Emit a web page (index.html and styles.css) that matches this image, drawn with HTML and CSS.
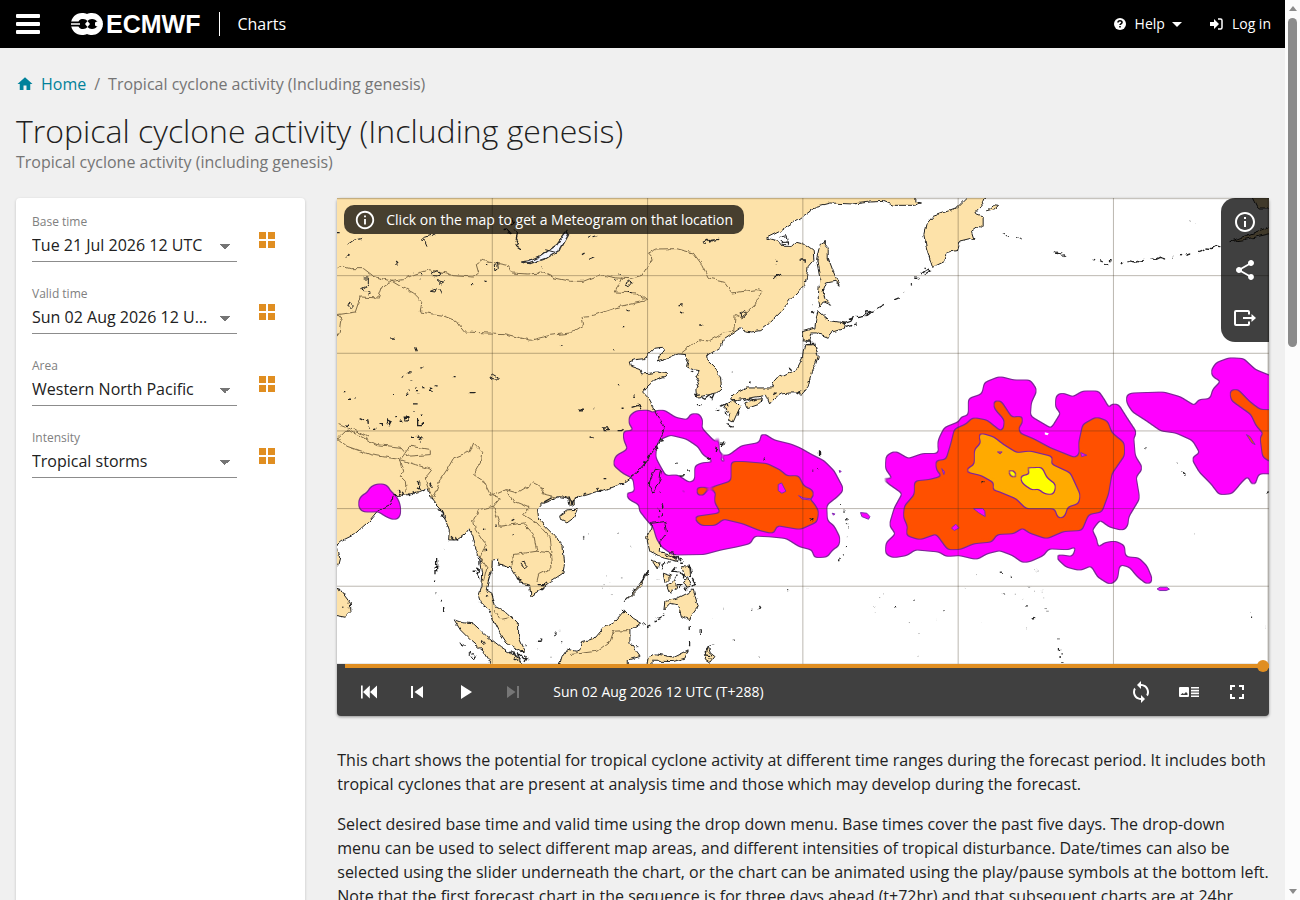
FILE: index.html
```html
<!DOCTYPE html>
<html lang="en">
<head>
  <meta charset="UTF-8">
  <meta name="viewport" content="width=device-width, initial-scale=1.0">
  <title>Tropical cyclone activity (Including genesis) | ECMWF</title>
  <link rel="stylesheet" href="styles.css">
</head>
<body>
  <div class="page">
    <header class="topbar">
      <button class="menu-btn" aria-label="Menu"><span></span><span></span><span></span></button>
      <a class="logo" href="#" aria-label="ECMWF">
        <svg width="32" height="22" viewBox="0 0 32 22">
          <path fill="#fff" d="M11 0C13 0 14.500.3 16 1 17.500.3 19 0 21 0c5 0 9 3.500 10.500 8v6C30 18.500 26 22 21 22c-2 0-3.500-.3-5-1-1.500.7-3 1-5 1C5 22 0 17.500 0 11S5 0 11 0z"/>
          <path d="M0 8.500h7.500C8.500 6.500 10 6 12 6c2 0 3.300.7 4.500 2 1.200-1.300 2.500-2 4.500-2 2.500 0 4 1 5 2.500h6v5h-6C25 15 23.500 16 21 16c-2 0-3.300-.7-4.500-2-1.200 1.300-2.500 2-4.500 2-2 0-3.500-.5-4.500-2.500H0z"/>
          <path fill="#fff" d="M0 10.200h9v1.600H0zM16.500 8l2.500 3-2.500 3-2.500-3zM24 9.500l3-1.500h4.500l.5 3-.5 3H27l-3-1.500z"/>
        </svg>
        <span>ECMWF</span>
      </a>
      <a class="app-name" href="#">Charts</a>
      <nav class="topnav">
        <button class="nav-item">
          <svg width="12" height="12" viewBox="0 0 12 12"><circle cx="6" cy="6" r="6" fill="#fff"/><path d="M4 4.600C4 2.200 8 2.200 8 4.500 8 5.800 6 5.800 6 7" fill="none" stroke="#000" stroke-width="1.600"/><path d="M5.200 8h1.600v1.500H5.200z"/></svg>
          <span>Help</span>
          <svg class="caret" width="10" height="5" viewBox="0 0 10 5"><path fill="#fff" d="M0 0h10L5 5z"/></svg>
        </button>
        <a class="nav-item" href="#">
          <svg width="13" height="12" viewBox="0 0 13 12"><path fill="#fff" d="M0 4h4V1l5 5-5 5V8H0z"/><path d="M8 1h2.500Q12 1 12 2.500v7Q12 11 10.500 11H8" fill="none" stroke="#fff" stroke-width="1.500"/></svg>
          <span>Log in</span>
        </a>
      </nav>
    </header>

    <main class="content">
      <nav class="breadcrumb">
        <a href="#"><svg width="18" height="18" viewBox="0 0 24 24"><path fill="currentColor" d="M10 20v-6h4v6h5v-8h3L12 3 2 12h3v8z"/></svg>Home</a>
        <span class="sep">/</span>
        <span>Tropical cyclone activity (Including genesis)</span>
      </nav>
      <h1>Tropical cyclone activity (Including genesis)</h1>
      <p class="subtitle">Tropical cyclone activity (including genesis)</p>

      <div class="columns">
        <form class="filters">
          <div class="filter">
            <div class="field">
              <label for="base">Base time</label>
              <select id="base"><option>Tue 21 Jul 2026 12 UTC</option></select>
            </div>
            <button type="button" class="grid-btn" aria-label="All base times"><span></span><span></span><span></span><span></span></button>
          </div>
          <div class="filter">
            <div class="field">
              <label for="valid">Valid time</label>
              <select id="valid"><option>Sun 02 Aug 2026 12 UTC (T+288)</option></select>
            </div>
            <button type="button" class="grid-btn" aria-label="All valid times"><span></span><span></span><span></span><span></span></button>
          </div>
          <div class="filter">
            <div class="field">
              <label for="area">Area</label>
              <select id="area"><option>Western North Pacific</option></select>
            </div>
            <button type="button" class="grid-btn" aria-label="All areas"><span></span><span></span><span></span><span></span></button>
          </div>
          <div class="filter">
            <div class="field">
              <label for="intensity">Intensity</label>
              <select id="intensity"><option>Tropical storms</option></select>
            </div>
            <button type="button" class="grid-btn" aria-label="All intensities"><span></span><span></span><span></span><span></span></button>
          </div>
        </form>

        <section class="chart">
          <div class="viewer">
            <div class="map">
              <svg class="map-svg" viewBox="0 0 2796 1398">
                <defs>
                  <filter id="rough" filterUnits="userSpaceOnUse" x="-20" y="-20" width="2836" height="1438" color-interpolation-filters="sRGB">
                    <feTurbulence type="fractalNoise" baseFrequency="0.05" numOctaves="2" seed="4"/>
                    <feDisplacementMap in="SourceGraphic" scale="14" xChannelSelector="R" yChannelSelector="G"/>
                  </filter>
                  <!-- rounds the polygon corners and draws a thin outline -->
                  <filter id="smooth" filterUnits="userSpaceOnUse" x="-20" y="-20" width="2880" height="1438" color-interpolation-filters="sRGB">
                    <feGaussianBlur stdDeviation="6"/>
                    <feComponentTransfer result="shape"><feFuncA type="linear" slope="6" intercept="-2.500"/></feComponentTransfer>
                    <feMorphology in="shape" operator="dilate" radius="2"/>
                    <feComponentTransfer result="edge">
                      <feFuncR type="linear" slope="0" intercept="0.500"/>
                      <feFuncG type="linear" slope="0" intercept="0.150"/>
                      <feFuncB type="linear" slope="0" intercept="0.600"/>
                    </feComponentTransfer>
                    <feMerge><feMergeNode in="edge"/><feMergeNode in="shape"/></feMerge>
                  </filter>
                  <g id="coast">
                    <!-- mainland -->
                    <path d="M-30-30H1734V10L1754 15 1730 22 1670 22 1640 10 1600 12 1549 18 1479 15 1439 25 1410 46 1389 62 1339 95 1289 120 1324 130 1339 148 1364 148 1379 133 1399 138 1419 152 1429 160 1431 185 1414 205 1409 235 1404 262 1389 278 1364 300 1334 340 1299 375 1269 398 1244 402 1219 397 1214 388 1189 405 1159 425 1154 445 1109 475 1111 487 1139 515 1151 540 1154 572 1139 585 1109 592 1079 598 1077 575 1087 550 1077 535 1087 518 1069 515 1049 508 1054 488 1044 470 1024 468 989 482 961 492 969 475 984 455 974 445 954 448 934 468 924 482 894 485 877 492 881 505 909 515 914 528 939 526 961 522 991 528 984 538 949 550 929 568 917 582 934 600 947 625 959 645 974 672 984 692 974 716 961 741 944 766 924 796 894 831 859 856 819 871 779 881 744 892 711 901 712 921 700 926 695 900 665 896 640 908 618 916 602 936 605 961 625 986 655 1016 678 1046 683 1096 678 1126 640 1151 615 1171 582 1196 578 1161 550 1156 535 1131 520 1106 500 1104 485 1101 485 1084 466 1086 465 1111 455 1146 448 1176 465 1186 475 1226 510 1244 545 1281 545 1316 565 1361 550 1361 510 1336 490 1306 470 1266 460 1241 430 1211 425 1196 435 1166 437 1126 430 1086 415 1046 408 1011 395 994 385 1008 360 1026 335 1026 337 996 325 961 315 936 295 916 280 896 270 871 245 881 210 891 170 893 160 921 120 941 95 971 50 1011 15 1028 0 1041 8 1080 0 1111-30 1111z"/>
                    <!-- Kamchatka and Chukotka -->
                    <path d="M1899-10L1859 30 1789 55 1767 80 1761 110 1769 150 1787 208 1824 190 1831 163 1861 158 1869 132 1911 122 1904 100 1924 85 1939 88 1939 55 1914 45 1939 15 1949-10zM1949 38L1970 20 1985 22 1975 32zM2745-10L2755 10 2765 30 2810 30V-10zM2679 131L2730 112 2810 82V105L2720 125z"/>
                    <!-- Sakhalin, Hokkaido, Honshu, Shikoku, Kyushu -->
                    <path d="M1449 140L1461 132 1474 150 1474 180 1489 220 1507 262 1494 250 1469 255 1459 280 1464 305 1481 322 1459 312 1449 325 1444 300 1449 240 1439 185zM1444 338L1479 368 1524 375 1519 392 1487 402 1474 418 1439 405 1424 405 1419 430 1399 425 1394 402 1434 390 1437 365zM1404 440L1434 440 1444 475 1434 505 1424 520 1414 565 1399 585 1359 585 1334 588 1314 600 1299 617 1289 592 1239 600 1199 605 1179 605 1194 588 1229 570 1279 570 1304 570 1311 550 1329 530 1339 535 1379 515 1397 480 1399 460zM1224 615L1249 605 1274 602 1264 620 1229 632zM1164 620L1189 605 1211 625 1199 650 1189 672 1174 665 1179 645 1159 630z"/>
                    <!-- Hainan, Taiwan, Luzon and the Philippines -->
                    <path d="M668 951L690 936 721 934 709 961 690 975 670 965zM939 846L957 811 974 814 969 846 949 884 937 866zM944 976L984 971 989 1006 969 1031 967 1061 999 1068 1024 1091 1000 1085 964 1076 939 1061 929 1021 941 996zM944 1086L967 1096 961 1113zM1034 1106L1059 1108 1061 1136 1044 1136zM979 1126L1004 1134 984 1154zM989 1161L1014 1146 1019 1171 999 1186zM981 1236L984 1211 1019 1201 1069 1176 1084 1226 1069 1246 1057 1266 1034 1256 1024 1221 999 1216zM862 1211L899 1171 934 1121 914 1161 879 1196zM1040 1150L1052 1140 1062 1165 1050 1168zM984 1070L1010 1062 1020 1082z"/>
                    <!-- Borneo, Sulawesi, Halmahera, Sumatra, Sri Lanka -->
                    <path d="M665 1410L675 1376 690 1354 720 1360 729 1356 734 1331 774 1321 799 1291 829 1276 864 1236 889 1261 914 1276 879 1296 879 1336 909 1376 874 1386 874 1410zM929 1410L934 1376 959 1368 1009 1378 1054 1356 1044 1381 1009 1391 949 1390zM1104 1386L1114 1346 1120 1365 1134 1376 1119 1396zM352 1266L375 1274 410 1278 440 1306 490 1346 545 1381 560 1410 470 1410 440 1361 400 1326 370 1296zM-20 1165L10 1176 40 1216 42 1241 25 1258-20 1250z"/>
                  </g>
                </defs>
                <rect width="2796" height="1398" fill="#fff"/>
                <g filter="url(#rough)">
                  <use href="#coast" fill="#fde2a9"/>
                  <path class="lake" d="M553 192L580 189 610 175 660 140 690 98 695 110 670 155 630 180 580 197z"/>
                </g>

                <!-- probability bands, lowest to highest -->
                <g fill="#f0f" filter="url(#smooth)">
                  <path d="M66 916Q68 893 92 886 100 860 130 859 155 860 158 880 188 900 190 936 190 964 170 964 145 955 125 939 100 942 80 940 66 935 66 916z"/>
                  <path fill-rule="evenodd" d="M879 655L899 640 935 638 950 650 953 640 980 638 1015 660 1055 668 1060 650 1085 648 1097 670 1092 690 1110 710 1130 730 1137 745 1140 705 1147 715 1145 765 1175 775 1215 745 1270 735 1275 705 1310 728 1360 740 1389 752 1420 770 1460 790 1490 820 1519 875 1500 895 1468 920 1470 970 1490 985 1508 1020 1505 1042 1485 1055 1470 1076 1433 1078 1428 1055 1389 1045 1350 1020 1300 1015 1250 1013 1240 1035 1200 1045 1150 1055 1100 1068 1010 1070 975 1045 960 1020 950 985 935 970 907 935 910 920 880 905 865 885 895 885 890 840 860 825 830 800 838 775 875 755 862 725 860 700 895 700 877 675zM957 746L965 725 1000 710 1050 722 1085 745 1100 770 1125 785 1135 795 1100 795 1075 805 1075 850 1055 855 1020 832 985 835 965 800 955 780zM1146 773L1160 778 1170 797 1152 793zM1027 868L1050 880 1050 890 1034 884z"/>
                  <path d="M1809 720L1824 690 1869 672 1874 657 1896 655 1896 603 1937 590 1944 555 1989 537 2029 548 2079 548 2099 577 2082 612 2079 656 2144 694 2164 661 2174 646 2157 626 2159 596 2174 586 2209 599 2239 581 2284 581 2304 611 2319 639 2324 618 2344 621 2369 661 2399 706 2389 716 2394 776 2416 811 2396 836 2407 901 2374 956 2372 981 2359 996 2319 986 2289 963 2264 996 2279 1026 2282 1053 2304 1036 2334 1031 2362 1044 2364 1078 2404 1081 2429 1106 2446 1146 2434 1159 2404 1136 2379 1106 2347 1098 2341 1141 2321 1159 2284 1136 2264 1101 2229 1116 2189 1106 2157 1076 2164 1071 2209 1078 2221 1041 2194 1054 2134 1051 2119 1071 2079 1089 2059 1093 2029 1071 1989 1056 1949 1066 1919 1083 1869 1071 1829 1074 1809 1061 1734 1054 1709 1071 1669 1078 1647 1066 1649 1036 1679 1008 1659 981 1674 931 1699 886 1625 834 1674 848 1647 811 1649 776 1674 761 1714 784 1759 768 1807 768 1804 735z"/>
                  <path d="M2369 601Q2372 588 2389 587L2479 584 2529 598 2574 626 2587 606 2622 604 2629 576 2657 548Q2625 540 2624 521L2639 496 2679 481 2719 483 2754 516 2850 555V828L2784 826 2764 826 2751 868 2734 831 2714 851 2684 886 2649 889 2624 856 2589 821 2566 781 2592 766 2569 726 2519 704 2474 698 2429 666 2389 641 2374 618z"/>
                </g>
                <path class="band" fill="#f0f" d="M2461 1173L2470 1168H2490L2498 1174 2488 1178H2468zM1571 944L1590 946 1599 956 1595 964 1575 956zM1486 946l8 2-4 4zM1507 818l6 2-4 4z"/>
                <g fill="#ff5000" filter="url(#smooth)">
                  <path d="M1184 792L1219 792 1289 798 1329 818 1349 836 1384 834 1399 866 1424 876 1431 893 1414 903 1429 916 1444 941 1439 971 1389 993 1319 981 1309 1006 1269 996 1219 976 1159 962 1134 981 1094 981 1070 958 1154 946 1134 911 1138 879 1130 876 1108 876 1098 892 1084 891 1079 870 1129 868 1184 851z"/>
                  <path d="M1849 716L1854 695 1889 680 1909 660 1949 668 1989 700 2001 697 2004 665 1974 630 1971 610 1991 610 2024 660 2057 655 2054 678 2044 685 2047 707 2089 724 2139 751 2214 781 2229 771 2227 736 2239 681 2279 659 2311 671 2324 706 2361 736 2362 771 2324 826 2314 886 2294 941 2254 948 2234 996 2179 999 2129 1021 2079 1004 2057 988 2029 1006 1979 1008 1964 1031 1909 1036 1869 1053 1834 1054 1799 1006 1749 1024 1709 1011 1714 986 1701 956 1704 926 1734 891 1734 851 1779 846 1819 836 1801 816 1797 789 1829 786 1844 736z"/>
                  <path d="M2680 579L2701 575 2739 614 2769 636 2850 638V789H2800L2779 776 2771 716 2784 709 2759 681 2744 648 2685 606z"/>
                </g>
                <g class="band">
                  <path fill="#ff5000" d="M2729 710L2740 716 2755 740 2745 735z"/>
                  <path fill="#f0f" d="M1324 860L1334 855 1347 880 1335 886 1324 878zM1385 893L1400 900 1425 903 1418 906 1395 903zM1910 932L1938 932 1944 940 1945 956 1925 944zM1844 990L1857 979 1867 990 1852 998zM2232 764L2250 772 2234 776zM1815 812l8 10-2 8z"/>
                  <path fill="#fff" stroke="none" d="M2124 703L2136 706 2132 712 2124 710z"/>
                </g>
                <path fill="#ffaa00" filter="url(#smooth)" d="M1925 705L1969 718 1999 741 2039 766 2079 761 2149 778 2139 798 2199 826 2229 891 2224 916 2191 926 2184 951 2169 963 2159 946 2157 931 2069 931 2039 901 1979 876 1967 878 1974 854 1934 831 1882 819 1914 801 1914 756 1934 736z"/>
                <path fill="#ff0" filter="url(#smooth)" d="M2050 836L2084 830 2063 800 2085 812 2114 809 2129 841 2156 861 2149 889 2124 886 2104 870 2089 876 2059 856zM2009 815L2028 818 2043 837 2028 839z"/>
                <path class="band" fill="#ff5000" d="M1982 762h14l-6 6z"/>

                <path class="grid" d="M466 0V1398M932 0V1398M1398 0V1398M1864 0V1398M2330 0V1398M0 233H2796M0 466H2796M0 699H2796M0 932H2796M0 1165H2796M0 2H2796M2794 0V1398"/>

                <g filter="url(#rough)">
                  <use href="#coast" class="coastline"/>
                  <!-- country borders -->
                  <path class="border" d="M0 215L15 205 40 212 80 212 110 235 165 250 200 245 230 230 275 215 330 225 345 233 410 237 425 225 418 200 440 185 475 195 515 203 525 225 570 228 620 225 650 240 700 250 739 250 790 230 840 240 880 242 915 232 935 200 948 180 935 165 960 153 1019 152 1069 165 1095 200 1115 240 1160 250 1185 285 1260 275 1275 280 1255 320 1215 360 1195 350 1190 405M165 250L190 265 230 285 255 310 250 342 315 352 355 368 382 402 500 407 580 427 640 412 700 405 740 380 735 355 770 352 850 325 930 308 900 285 835 282 855 238M165 250L135 270 125 300 70 297 55 342 0 350 15 360 10 400 0 415M1030 468L1085 425 1120 430 1159 405 1190 400"/>
                  <path class="border" d="M0 720L30 745 100 770 190 785 205 765 190 748 120 740 60 710 30 696 0 725M5 680L30 690 60 700 95 718M190 785L200 820 190 835 205 850 208 880M190 785L235 800 285 815 265 840 275 875 290 900M290 900L310 845 330 815 350 780 400 760 410 735 435 760 430 795 410 830 440 850 460 890 490 900 470 925 425 935 410 965 415 995 445 1040 430 1080 450 1110 440 1150M470 890L505 875 540 885 590 855 620 870 615 890 655 900M505 875L530 910 580 930 560 950 600 975 640 1020 645 1065M470 925L490 985 560 975 590 1010 600 1060 530 1070 525 1105M600 1060L640 1065 645 1110 605 1130 600 1150M205 765L220 745 280 755 280 770 210 775zM700 1370L780 1360 820 1330 830 1300 875 1298M475 1240L490 1265 515 1260"/>
                  <!-- lakes and small islands -->
                  <path class="lakes" d="M28 140L45 128 75 121M26 178l10-5M285 226l15-8 12 6-8 10-15-1zM472 200l10-4 2 12-10 12zM254 125L262 118 292 108M254 125l10 4 6 14M300 248l20 4-10 6zM280 280l18-8-4 10zM305 275l8 14M32 318l10-2 7 8-5 7zM458 537l10-6 16 9-4 6-12-1zM80 240h14v16l-8 10-12 6 6 6h12l10 6-8 4M862 262l18-14 6 4-12 14zM1213 345l8-4 8 8-5 9-10-2zM552 1095l8-2 12 12-6 4-8-5zM432 1332l6-4 7 8-4 4zM368 1335l15 8M400 1360l15 18-5 8-10-12zM2002 106l14 14M2038 118l14 8M2156 162l18 3M2174 172l10-2M1114 1346l12-4 8-2M650 1302l8 2-2 8M1328 118l20-5 4 22-14-4-8-6M625 155l30 8M1336 130h16v10h-16z"/>
                  <path class="islets" d="M500 95l12-2 8 12-8 4M520 82l10-4-4-16M530 95l12 10-4 16 6 12-6 12 12 8M175 192l6 8M160 420h12M236 448l5 12M212 522h12M250 510h6M193 534h6M217 550h6M235 568h5M256 569h9M278 568h8M296 564h6M214 577h4M236 578h10M276 577h8M207 592h7M240 587h8M228 618h14M262 608h2M232 642h2M254 652h6M242 660v20h14v-8M202 658h14v8h-12zM188 670h8M172 656h6M150 680l4-14 8 4-6 12M124 676h12v8M92 664l2 14M68 662l14 6M94 688h4M110 694h5M24 682h12M22 581h6M36 604h6M52 600h4M168 592h3M350 536h6M398 584h18M669 444h5M402 260h6M440 250h9M244 244h5M252 230h6M226 221h2M450 200h4M614 206h4M243 26M240 720h14l-8 10M222 718h10M0 104h8"/>
                  <path class="islets" d="M1098 130l12-6 8 8 14-6M1110 136l-10-2M1120 128l24-4M1317 185v4M1316 197h4M1309 240l12-8M1318 236l18-8M1388 186h20v8M872 338h6M853 389h6M1025 324l12-4M1030 340l6 6M1090 381h6M829 458h5M848 228h4M832 244h4M876 284h8M735 170l8-5M757 184l12-5M751 118l8-4M770 116l12-4M728 634h8v5h-8zM770 630h2M843 560h3M892 595h5M884 628l20-6 8 8M857 631h6M842 698h12l6-4M800 690h10l4 8h-12zM770 716l-12 2M1152 625l14-8 4 10M1165 640l4 12M1172 680l12 8 6-6M1206 640l-3 10M1137 633l10 8M1090 596l14 8 12-10 12 8 6-14M1062 520l10 4M1078 560l6 10M1075 590l14-2M1080 620h14M1239 555l5-4M1360 510l4 6M1185 523h2M1219 608l20-6 16 4M1309 590l10-6M1380 588l10-10M1407 432h14v8h-14M1425 436h8v8M1425 340l6 6M1426 320h1M1459 131l6-2v8M1520 378l22-8 6-10-12 4M1524 388l22-6M1560 378l-8 2M1560 356l20-4 10-10 14-2-18 14M1618 332l26-14M1672 306l14-6M1700 286l4-3M1722 262l6-4M1735 240l10 2M1752 228l20-14 10 4-18 10M1760 210l4 2M2154 165l10 2M2180 176l5-3M2268 186l4-2M2290 188l8 4M2302 196l12 4M2320 186l4 4M2352 198l8-6M2375 188l10 2 14 2 10-4M2410 190l14-6M2440 182l16 2 12-6 20 6M2505 178l2-1M2532 174l4-2M2546 172l14-4M2584 164l20-8M2606 150l20 2 12-8 16 2M2556 65h4M2572 76h4"/>
                  <path class="islets" d="M240 712l10 6-8 4M240 850l8 6v18l-8-4M184 876l6 16M196 882l6 12M214 884l4 10M228 880l4 8M256 876l8 4M278 856l8 14M282 900l6 6M302 932l12 4 6 10-4 10 8 4M342 1018l8 8M356 1020l4 8M299 1080v24M296 1108h6v10h-8v14M291 1150h4M296 1184h2M306 1196h2M316 1208v6M320 1230v12M321 1052h2M420 1080l6 8v14M418 1110l10 6-6 14M426 1130l4 14M410 1120h8M448 1195l6 4M426 1214l8 2M440 1228h6M462 1250l4 6M455 1244l6-4M514 1364l14-2 6 14 18-4 8 10 14-2M540 1366l10 20M562 1370l8 12-6 10M530 1380l14 8M600 1330h14M563 1340h3M614 1322v6M673 1334h3M602 1160h20l8-8M610 1176l12-8M500 1100l14 8M540 1140l10 10M444 1052l2 10M438 994h4M475 982h4M524 968l8-4M524 1008h4M565 1110h4M16 1231h3M32 1216h2M35 1230h2M622 912l14-8 8-4M696 896l8 20 8-10M684 896h8M705 925l4-20M711 901l14-6M779 870l6 10M740 890l8-6M785 884l6-10M800 842h8M850 862l12-4"/>
                  <path class="islets" d="M974 700l10-6M970 720l8 8-8 2M956 744l6 10-8 4M940 766l-10 10 6 8M920 790l8 6-8 8M905 820l-8 6M1152 736h8l-4 8M1142 748l-4 14M1110 785l12-4M1018 796h4M1030 832l14-2M1053 820l6-2M966 886h2M976 916l2 14M964 954h4M976 946v8M966 940l-2-8M1444 812h2M1448 757v20M1430 820h2M1512 920h3M1520 940h3M1530 960v8M1532 976v4M1534 990h2M1530 1016h1M1530 1044l-2 6M1518 1068h3M1510 1082l-2 8M1934 854h6M1418 962l12 4M1280 783l6 2M935 1120l-6 10M925 1130l-12 20M890 1178l4-4M990 1092h14M1010 1080l14-4 4 14M1018 1108l-10 12 14 2M1030 1080l4 8M1026 1120l10 12M1018 1130l-6 14M1040 1128v14M1066 1140l8 14-6 12M1020 1160h14l-8 10M1044 1176l6-6M1038 1096h-8M976 1100v14M984 1092l-6 8M1056 1100l8 24M930 1286l10-4M920 1276l4 4M950 1272l10-4M960 1262l14-6M974 1252l8-4M1057 1286v10M1090 1294v14M1058 1326v22M1270 1224l-6 12M1245 1237l4-2M1354 1175h3M1192 1327h2M1267 1381h1M1110 1350l-2 14M1104 1370l20 4M1114 1384h12M898 1346h3M738 1020h4M842 1006h1M755 1008h1M1730 1207h3M1820 1238h6M1932 1274h3M1670 1226h6M1992 1126h3M2022 1138h3M2065 1224h8M2088 1258l4 3M2162 1326h3M2168 1350v8M2176 1366v4M2170 1374v6M2176 1392h8M2535 822l8 8M2423 749h3M2790 888l6-4M2746 1258h3M2522 796h1"/>
                  <path class="faint" d="M1624 1196h3M1636 1188h2M1614 1242h2M1716 1274h3M1796 1264h2M1486 1226h2M1998 1187h4M2008 1190h1M2034 1186h3M2056 1206h3M2074 1168h6M2090 1180h4M2096 1112h2M2100 1120h2M2068 1290h2M2120 1232h8M2128 1240h8M2115 1180h2M2120 1200h2M1412 1171h2M1884 1171h2M1613 1226h2M1742 1310h3M1742 1375h3M1918 1130h2M2572 1008h2M2740 1246h2M2786 1288h1M800 1160h3M816 1172h2M825 1190h2M790 1168h3M818 1152h2M808 1134h2M880 1045h3M725 1040h2M740 1018h2M852 1140h5M962 1146h3M1126 1260h3M1156 1234h2M1190 1326h2M602 1350h3M640 1378h2M668 1300h2"/>
                </g>
              </svg>

              <div class="hint">
                <svg width="22" height="22" viewBox="0 0 24 24"><path fill="currentColor" d="M11 7h2v2h-2zm0 4h2v6h-2zm1-9C6.480 2 2 6.480 2 12s4.480 10 10 10 10-4.480 10-10S17.520 2 12 2zm0 18c-4.410 0-8-3.590-8-8s3.590-8 8-8 8 3.590 8 8-3.590 8-8 8z"/></svg>
                <span>Click on the map to get a Meteogram on that location</span>
              </div>

              <div class="map-tools">
                <button aria-label="Information"><svg width="24" height="24" viewBox="0 0 24 24"><path fill="currentColor" d="M11 7h2v2h-2zm0 4h2v6h-2zm1-9C6.480 2 2 6.480 2 12s4.480 10 10 10 10-4.480 10-10S17.520 2 12 2zm0 18c-4.410 0-8-3.590-8-8s3.590-8 8-8 8 3.590 8 8-3.590 8-8 8z"/></svg></button>
                <button aria-label="Share"><svg width="24" height="24" viewBox="0 0 24 24"><path fill="currentColor" d="M18 16.080c-.76 0-1.440.3-1.960.77L8.910 12.700c.05-.23.09-.46.09-.7s-.04-.47-.09-.7l7.050-4.110c.54.5 1.250.81 2.040.81 1.660 0 3-1.340 3-3s-1.340-3-3-3-3 1.340-3 3c0 .24.04.47.09.7L8.040 9.810C7.500 9.310 6.790 9 6 9c-1.660 0-3 1.340-3 3s1.340 3 3 3c.79 0 1.500-.31 2.040-.81l7.120 4.160c-.05.21-.08.43-.08.65 0 1.610 1.310 2.920 2.920 2.920s2.920-1.310 2.920-2.920-1.310-2.920-2.920-2.920z"/></svg></button>
                <button aria-label="Export"><svg width="24" height="24" viewBox="0 0 24 24"><path d="M16 8.500V6q0-1-1-1H3Q2 5 2 6v12q0 1 1 1h12q1 0 1-1v-2.500M10 12h9" fill="none" stroke="currentColor" stroke-width="2"/><path fill="currentColor" d="M18.500 8l4.500 4-4.500 4z"/></svg></button>
              </div>
            </div>

            <div class="timeline">
              <input type="range" min="0" max="10" value="10" aria-label="Forecast step">
            </div>
            <div class="controls">
              <button aria-label="First"><svg width="24" height="24" viewBox="0 0 24 24"><path fill="currentColor" d="M4 5.500h1.700v13H4zM12.800 5.500v13L6 12zM20 5.500v13L13 12z"/></svg></button>
              <button aria-label="Previous"><svg width="24" height="24" viewBox="0 0 24 24"><path fill="currentColor" d="M6 6h2v12H6zm3.500 6l8.500 6V6z"/></svg></button>
              <button aria-label="Play"><svg width="24" height="24" viewBox="0 0 24 24"><path fill="currentColor" d="M8 5v14l11-7z"/></svg></button>
              <button aria-label="Next" disabled><svg width="24" height="24" viewBox="0 0 24 24"><path fill="currentColor" d="M6 18l8.500-6L6 6zM16 6v12h2V6z"/></svg></button>
              <span class="time">Sun 02 Aug 2026 12 UTC (T+288)</span>
              <button aria-label="Loop"><svg width="24" height="24" viewBox="0 0 24 24"><path fill="currentColor" d="M12 4V1L8 5l4 4V6c3.310 0 6 2.690 6 6 0 1.010-.25 1.970-.7 2.800l1.460 1.460C19.540 15.030 20 13.570 20 12c0-4.420-3.580-8-8-8zm0 14c-3.310 0-6-2.690-6-6 0-1.010.25-1.970.7-2.800L5.240 7.740C4.460 8.970 4 10.430 4 12c0 4.420 3.580 8 8 8v3l4-4-4-4z"/></svg></button>
              <button aria-label="Legend"><svg width="24" height="24" viewBox="0 0 24 24"><path fill="currentColor" fill-rule="evenodd" d="M3 7h8q1 0 1 1v8q0 1-1 1H3q-1 0-1-1V8q0-1 1-1zM3.500 15h7V13.500L9 12 7 14 5.500 13zM14 7h8v1.600h-8zM14 9.800h8v1.600h-8zM14 12.600h8v1.600h-8zM14 15.400h8V17h-8z"/></svg></button>
              <button aria-label="Full screen"><svg width="24" height="24" viewBox="0 0 24 24"><path fill="currentColor" d="M7 14H5v5h5v-2H7v-3zm-2-4h2V7h3V5H5v5zm12 7h-3v2h5v-5h-2v3zM14 5v2h3v3h2V5h-5z"/></svg></button>
            </div>
          </div>

          <div class="description">
            <p>This chart shows the potential for tropical cyclone activity at different time ranges during the forecast period. It includes both tropical cyclones that are present at analysis time and those which may develop during the forecast.</p>
            <p>Select desired base time and valid time using the drop down menu. Base times cover the past five days. The drop-down menu can be used to select different map areas, and different intensities of tropical disturbance. Date/times can also be selected using the slider underneath the chart, or the chart can be animated using the play/pause symbols at the bottom left. Note that the first forecast chart in the sequence is for three days ahead (t+72hr) and that subsequent charts are at 24hr</p>
          </div>
        </section>
      </div>
    </main>
  </div>
  <div class="scrollbar" aria-hidden="true">
    <span class="arrow up"></span>
    <span class="thumb"></span>
    <span class="arrow down"></span>
  </div>
</body>
</html>
```
FILE: styles.css
```css
:root {
  --accent: #e08e21;
  --link: #00829b;
  --dark: #404040;
  --muted: #757575;
}

* {
  box-sizing: border-box;
}

body {
  margin: 0;
  height: 100vh;
  display: grid;
  grid-template-columns: 1fr 15px;
  overflow: hidden;
  background: #f0f0f0;
  color: #212121;
  font: 16px/24px "Open Sans", "Noto Sans", sans-serif;
}

a {
  color: inherit;
  text-decoration: none;
}

button {
  padding: 0;
  border: none;
  background: none;
  color: inherit;
  font: inherit;
  cursor: pointer;
}

svg {
  display: block;
}

.page {
  height: 100vh;
  overflow-y: auto;
  scrollbar-width: none;
}

/* top bar */
.topbar {
  display: flex;
  align-items: center;
  height: 48px;
  padding: 0 14px 0 16px;
  background: #000;
  color: #fff;
}

.menu-btn {
  display: grid;
  gap: 4px;
  width: 24px;
}

.menu-btn span {
  height: 4px;
  border-radius: 1px;
  background: #fff;
}

.logo {
  display: flex;
  align-items: center;
  gap: 3px;
  height: 24px;
  margin-left: 31px;
  padding-right: 19px;
  border-right: 1px solid #fff;
  font: bold 25px/24px "Liberation Sans", Arial, sans-serif;
}

.app-name {
  margin-left: 17px;
}

.topnav {
  display: flex;
  gap: 28px;
  margin-left: auto;
  font-size: 14px;
}

.nav-item {
  display: flex;
  align-items: center;
  gap: 9px;
}

.caret {
  margin-left: -2px;
}

/* headings */
.content {
  padding: 24px 16px;
}

.breadcrumb {
  display: flex;
  gap: 8px;
  color: var(--muted);
}

.breadcrumb a {
  display: flex;
  align-items: center;
  gap: 7px;
  color: var(--link);
}

h1 {
  margin: 15px 0 0;
  font-size: 32px;
  line-height: 40px;
  font-weight: 300;
}

.subtitle {
  margin: 0 0 25px;
  line-height: 22px;
  color: var(--muted);
}

.columns {
  display: grid;
  grid-template-columns: calc(25% - 24px) 1fr;
  gap: 32px;
}

/* filters */
.filters {
  padding: 16px;
  border-radius: 4px;
  background: #fff;
  box-shadow: 0 1px 3px rgba(0, 0, 0, 0.2);
}

.filter {
  display: flex;
  align-items: center;
  gap: 22px;
  margin-bottom: 24px;
}

.field {
  flex: 1;
  min-width: 0;
  height: 48px;
  border-bottom: 1px solid #8c8c8c;
}

.field label {
  display: block;
  font-size: 12px;
  line-height: 16px;
  color: #808080;
}

.field select {
  width: 100%;
  height: 30px;
  padding: 0 28px 0 0;
  border: none;
  appearance: none;
  background: conic-gradient(from -45deg at 50% 100%, #757575 90deg, transparent 0) no-repeat right 7px top 14px / 10px 5px;
  color: #212121;
  font: inherit;
  text-overflow: ellipsis;
}

.grid-btn {
  display: grid;
  grid-template-columns: 7px 7px;
  gap: 2px;
  margin: 4px 14px 0 0;
}

.grid-btn span {
  height: 7px;
  background: var(--accent);
}

/* map viewer */
.viewer {
  border-radius: 4px;
  background: var(--dark);
  color: #fff;
  box-shadow: 0 1px 3px rgba(0, 0, 0, 0.4);
}

.map {
  position: relative;
}

.map-svg {
  width: 100%;
  height: auto;
}

.grid {
  fill: none;
  stroke: rgba(60, 50, 30, 0.35);
  stroke-width: 3;
}

.lake {
  fill: #f4f6ff;
  stroke: #333;
  stroke-width: 4;
}

.band {
  stroke: #7a2fb0;
  stroke-width: 3;
}

.coastline,
.border,
.lakes,
.islets,
.faint {
  fill: none;
  stroke: #222;
  stroke-width: 3;
}

.border {
  stroke: #7d6a48;
}

.islets {
  stroke-width: 4;
}

.faint {
  stroke: #999;
}

.hint {
  position: absolute;
  top: 7px;
  left: 7px;
  display: flex;
  align-items: center;
  gap: 10px;
  height: 29px;
  padding: 0 11px 0 10px;
  border-radius: 10px;
  background: rgba(0, 0, 0, 0.72);
  font-size: 14px;
}

.map-tools {
  position: absolute;
  top: 0;
  right: 0;
  border-radius: 14px 0 0 14px;
  background: rgba(0, 0, 0, 0.75);
}

.map-tools button,
.controls button {
  display: grid;
  place-items: center;
  width: 48px;
  height: 48px;
}

.timeline {
  position: relative;
  height: 4px;
  padding-left: 8px;
}

.timeline input {
  display: block;
  width: 100%;
  height: 4px;
  margin: 0;
  appearance: none;
  background: var(--accent);
}

.timeline input::-webkit-slider-thumb {
  appearance: none;
  width: 12px;
  height: 12px;
  border-radius: 50%;
  background: var(--accent);
}

.controls {
  display: flex;
  align-items: center;
  height: 48px;
  padding: 0 8px;
  font-size: 14px;
}

.controls button:disabled {
  color: #767676;
}

.time {
  margin: 0 auto 0 16px;
}

.description {
  margin-top: 32px;
}

.description p {
  margin: 0 0 16px;
}

/* scroll track at the window edge */
.scrollbar {
  display: flex;
  flex-direction: column;
  align-items: center;
  padding: 6px 0;
  background: #fcfcfc;
}

.arrow {
  border: 4px solid transparent;
}

.arrow.up {
  border-top: none;
  border-bottom: 5px solid #8b8b8b;
}

.arrow.down {
  margin-top: auto;
  border-bottom: none;
  border-top: 5px solid #8b8b8b;
}

.thumb {
  width: 9px;
  height: 37%;
  margin-top: 7px;
  border-radius: 5px;
  background: #8b8b8b;
}
```
